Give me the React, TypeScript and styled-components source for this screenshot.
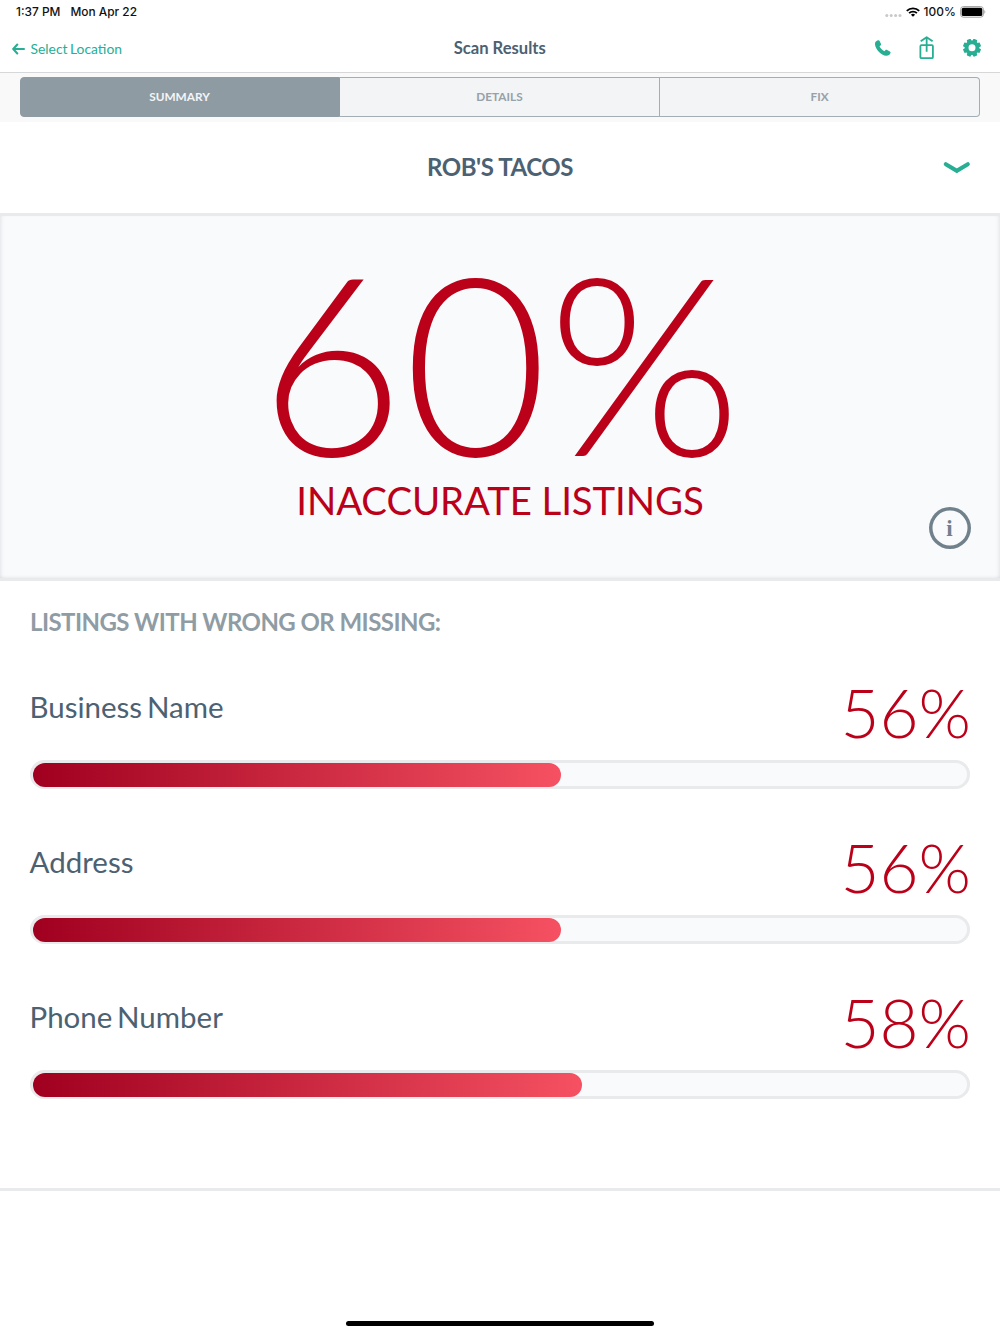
import React from 'react';
import styled, { createGlobalStyle } from 'styled-components';

const GlobalStyle = createGlobalStyle`
  *, *::before, *::after { box-sizing: border-box; }
  body { margin: 0; background: #fff; font-family: Lato, sans-serif; color: #4c6172; }
  svg { display: block; }
  h1, h2, h3, p { margin: 0; }
`;

const Screen = styled.div`
  width: 1000px;
  height: 1334px;
  display: flex;
  flex-direction: column;
  background: #fff;
  overflow: hidden;
`;

const StatusBar = styled.div`
  height: 24px;
  flex: none;
  display: flex;
  justify-content: space-between;
  padding: 0 14.5px 0 16px;
  font: 500 11.9px/24px Inter, sans-serif;
  color: #111;
`;

const StatusGroup = styled.div<{ $gap: number }>`
  display: flex;
  align-items: center;
  gap: ${(p) => p.$gap}px;
`;

const NavBar = styled.header`
  height: 49px;
  flex: none;
  display: grid;
  grid-template-columns: 1fr auto 1fr;
  align-items: center;
  padding: 0 19.5px 0 12px;
  border-bottom: 1px solid #d5d7d9;
`;

const BackLink = styled.a`
  display: flex;
  align-items: center;
  gap: 5.5px;
  padding-top: 2px;
  color: #27ae93;
  font-size: 13.9px;
  line-height: 18px;
  word-spacing: -1.2px;
`;

const NavTitle = styled.h1`
  font-size: 16.6px;
  line-height: 20px;
  font-weight: 700;
  padding-left: 7px;
`;

const NavActions = styled.div`
  display: flex;
  justify-content: flex-end;
  align-items: center;
  color: #27ae93;
`;

const ActionIcon = styled.span<{ $gap?: number }>`
  margin-left: ${(p) => p.$gap ?? 0}px;
`;

const TabStrip = styled.div`
  height: 49px;
  flex: none;
  background: #f9f9f9;
  padding: 4px 20px 0;
`;

const Segmented = styled.div`
  height: 39.5px;
  display: grid;
  grid-template-columns: repeat(3, 1fr);
`;

const Tab = styled.div<{ $active?: boolean }>`
  display: flex;
  align-items: center;
  justify-content: center;
  font-size: 11.8px;
  font-weight: 700;
  color: ${(p) => (p.$active ? '#f3f5f6' : '#96a1a8')};
  background: ${(p) => (p.$active ? '#8e9ba3' : '#f3f4f6')};
  border: 1px solid ${(p) => (p.$active ? '#8e9ba3' : '#a3adb3')};
  &:first-child { border-radius: 4px 0 0 4px; padding-right: 1px; }
  &:last-child { border-radius: 0 4px 4px 0; }
  & + & { border-left: 0; }
`;

const LocationHeader = styled.div`
  height: 91px;
  flex: none;
  display: grid;
  grid-template-columns: 1fr auto 1fr;
  align-items: center;
  padding: 0 30px;
`;

const LocationName = styled.h2`
  grid-column: 2;
  padding-bottom: 1px;
  font-size: 24px;
  line-height: 30px;
  font-weight: 700;
  letter-spacing: -0.4px;
`;

const Chevron = styled.span`
  justify-self: end;
`;

const Hero = styled.section`
  position: relative;
  height: 368px;
  flex: none;
  display: flex;
  flex-direction: column;
  align-items: center;
  background: #f9fafc;
  border: solid #e9eaeb;
  border-width: 3px 0;
  box-shadow:
    inset 4px 0 4px -3px rgba(60, 65, 70, 0.12),
    inset -4px 0 4px -3px rgba(60, 65, 70, 0.12),
    inset 0 -4px 3px -3px rgba(60, 65, 70, 0.07);
  color: #bb0019;
`;

const HeroValue = styled.div`
  margin-top: 39px;
  padding-left: 1px;
  font-size: 248.2px;
  line-height: 210px;
  font-weight: 300;
`;

const HeroLabel = styled.div`
  margin-top: 11px;
  font-size: 38.4px;
  line-height: 48px;
  letter-spacing: -0.1px;
`;

const InfoBadge = styled.span`
  position: absolute;
  right: 29.5px;
  bottom: 29px;
  width: 42px;
  height: 42px;
  box-shadow: inset 0 0 0 3.5px #71818c;
  border-radius: 50%;
  display: flex;
  align-items: center;
  justify-content: center;
  font: 700 23px/1 "Liberation Serif", serif;
  color: #71818c;
`;

const Listings = styled.section`
  height: 610px;
  flex: none;
  padding: 26px 30px 0;
  border-bottom: 3px solid #e9eaeb;
`;

const ListingsTitle = styled.h3`
  padding-bottom: 1px;
  font-size: 24px;
  line-height: 30px;
  font-weight: 700;
  letter-spacing: -0.55px;
  color: #8f9ca4;
`;

const Metric = styled.div`
  height: 155.2px;
  padding-top: 41px;
`;

const MetricHead = styled.div`
  display: flex;
  justify-content: space-between;
  height: 81px;
`;

const MetricName = styled.div`
  margin-left: -0.5px;
  padding-top: 10px;
  font-size: 29.5px;
  line-height: 36px;
  word-spacing: -2.8px;
`;

const MetricValue = styled.div`
  margin: -2px -1px 0 0;
  font-size: 67.3px;
  line-height: 70px;
  font-weight: 300;
  color: #bb0019;
`;

const Track = styled.div`
  height: 29px;
  padding: 2.5px;
  border-radius: 15px;
  background: #f9fafc;
  box-shadow: inset 0 0 0 3px #e9eaeb;
`;

const Fill = styled.div`
  height: 24px;
  border-radius: 12px;
  background: linear-gradient(90deg, #a0001f, #f55162);
`;

const HomeArea = styled.footer`
  flex: 1;
  display: flex;
  align-items: flex-end;
  justify-content: center;
  padding-bottom: 8px;
`;

const HomeIndicator = styled.div`
  width: 308px;
  height: 5px;
  border-radius: 3px;
  background: #000;
`;

const metrics = [
  { name: 'Business Name', label: '56%', ratio: 56.52 },
  { name: 'Address', label: '56%', ratio: 56.52 },
  { name: 'Phone Number', label: '58%', ratio: 58.72 },
];

const SignalDots = () => (
  <svg width="17" height="9" viewBox="0 0 17 9" fill="#c9c9c9">
    {[1.8, 6.2, 10.6, 15].map((x) => <circle key={x} cx={x} cy="7.5" r="1.5" />)}
  </svg>
);

const Wifi = () => (
  <svg width="14" height="10" viewBox="0 0 14 10" fill="none" stroke="#000" strokeWidth="1.9">
    <path d="M.8 3.9a8.8 8.8 0 0 1 12.4 0" />
    <path d="M3.1 6.2a5.5 5.5 0 0 1 7.8 0" />
    <path d="M7 9.8 4.9 7.8a3 3 0 0 1 4.2 0Z" fill="#000" stroke="none" />
  </svg>
);

const Battery = () => (
  <svg width="26" height="12" viewBox="0 0 26 12">
    <rect x=".6" y=".6" width="22.8" height="10.6" rx="2.8" fill="none" stroke="#a0a0a0" strokeWidth="1" />
    <rect x="1.7" y="1.7" width="20.6" height="8.4" rx="1.7" />
    <path d="M24.4 4v3.8c1.2-.5 1.2-3.3 0-3.8Z" fill="#a0a0a0" />
  </svg>
);

const ArrowLeft = () => (
  <svg width="13" height="12" viewBox="0 0 13 12" fill="none" stroke="currentColor" strokeWidth="2" strokeLinecap="round" strokeLinejoin="round">
    <path d="M12 6H1.3M5.3 1.5 1.2 6l4.1 4.5" />
  </svg>
);

const Phone = () => (
  <svg width="16" height="17" viewBox="0 0 16 17" fill="currentColor">
    <path d="M1.5 1 2.9.3c.7-.3 1.4-.1 1.7.6l1.3 2.9c.3.7.1 1.3-.4 1.7l-1 .8c.9 2 2.7 3.8 4.9 4.9l.9-1c.5-.5 1.2-.6 1.8-.3l2.8 1.5c.6.4.8 1 .6 1.6-.7 1.9-2.3 2.9-4.3 2.8C6.1 15.4.3 9.2 0 4.2-.1 2.8.5 1.6 1.5 1Z" />
  </svg>
);

const Share = () => (
  <svg width="16" height="24" viewBox="0 0 16 24" fill="none" stroke="currentColor" strokeWidth="1.8" strokeLinejoin="round">
    <rect x="1.4" y="9.2" width="12.5" height="13" rx="1" />
    <path d="M7.65 15.8V1.5M1.7 5.3 7.65 1.2l5.95 4.1" />
  </svg>
);

const Gear = () => (
  <svg width="18" height="18" viewBox="0 0 18 18" fill="currentColor" fillRule="evenodd">
    <g transform="translate(9 8.7)">
      {[0, 45, 90, 135, 180, 225, 270, 315].map((angle) => (
        <path key={angle} transform={`rotate(${angle + 22.5})`} d="M-2.5-5.5-2-8.8Q-1.9-9-1.6-9H1.6Q1.9-9 2-8.8L2.500-5.500Z" />
      ))}
      <path d="M0-7.3A7.3 7.3 0 1 1 0 7.3 7.3 7.3 0 1 1 0-7.3ZM0-3.5A3.5 3.5 0 1 0 0 3.5 3.5 3.5 0 1 0 0-3.5Z" />
    </g>
  </svg>
);

export default function App() {
  return (
    <Screen>
      <GlobalStyle />
      <StatusBar>
        <StatusGroup $gap={10}>
          <span>1:37 PM</span>
          <span>Mon Apr 22</span>
        </StatusGroup>
        <StatusGroup $gap={3.8}>
          <SignalDots />
          <Wifi />
          <span>100%</span>
          <Battery />
        </StatusGroup>
      </StatusBar>
      <NavBar>
        <BackLink><ArrowLeft />Select Location</BackLink>
        <NavTitle>Scan Results</NavTitle>
        <NavActions>
          <ActionIcon><Phone /></ActionIcon>
          <ActionIcon $gap={28}><Share /></ActionIcon>
          <ActionIcon $gap={28}><Gear /></ActionIcon>
        </NavActions>
      </NavBar>
      <TabStrip>
        <Segmented>
          <Tab $active>SUMMARY</Tab>
          <Tab>DETAILS</Tab>
          <Tab>FIX</Tab>
        </Segmented>
      </TabStrip>
      <LocationHeader>
        <LocationName>ROB'S TACOS</LocationName>
        <Chevron>
          <svg width="27" height="13" viewBox="0 0 27 13" fill="none" stroke="#27ae93" strokeWidth="4" strokeLinecap="round">
            <path d="M2.8 3.2 13.8 9.8 24.8 3.2" />
          </svg>
        </Chevron>
      </LocationHeader>
      <Hero>
        <HeroValue>60%</HeroValue>
        <HeroLabel>INACCURATE LISTINGS</HeroLabel>
        <InfoBadge>i</InfoBadge>
      </Hero>
      <Listings>
        <ListingsTitle>LISTINGS WITH WRONG OR MISSING:</ListingsTitle>
        {metrics.map((metric) => (
          <Metric key={metric.name}>
            <MetricHead>
              <MetricName>{metric.name}</MetricName>
              <MetricValue>{metric.label}</MetricValue>
            </MetricHead>
            <Track>
              <Fill style={{ width: `${metric.ratio}%` }} />
            </Track>
          </Metric>
        ))}
      </Listings>
      <HomeArea><HomeIndicator /></HomeArea>
    </Screen>
  );
}
